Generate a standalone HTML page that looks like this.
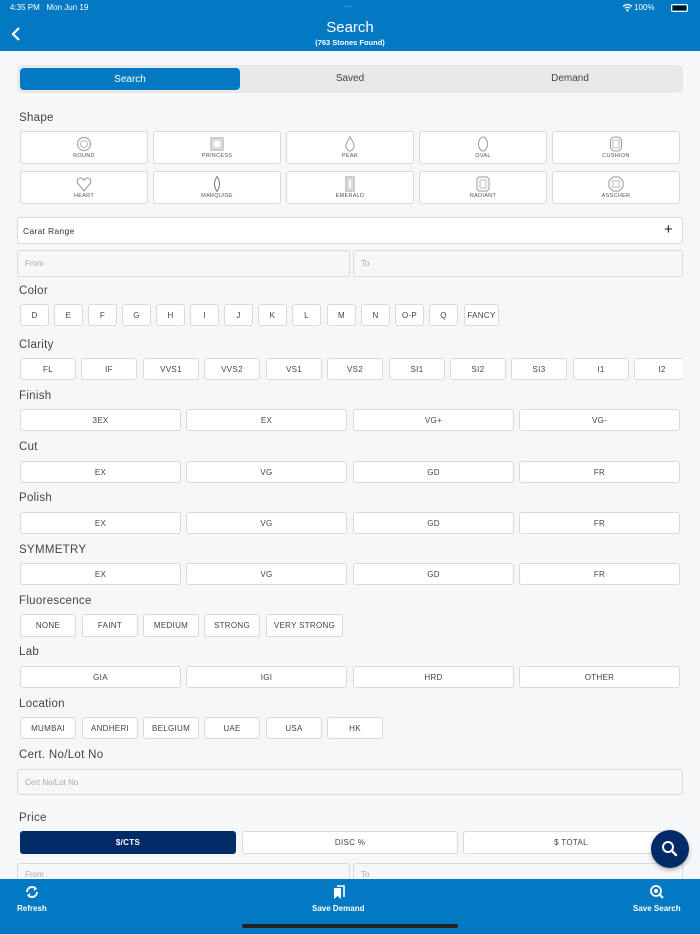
<!DOCTYPE html>
<html><head><meta charset="utf-8">
<style>
*{box-sizing:border-box;margin:0;padding:0}
body{width:700px;height:934px;overflow:hidden;background:#f6f7f9;font-family:"Liberation Sans",sans-serif;position:relative;color:#333}
.a{position:absolute}
.hdr{left:0;top:0;width:700px;height:51px;background:#0279c2;color:#fff}
.lbl{left:19px;font-size:11.5px;color:#444;letter-spacing:.3px}
.b{position:absolute;background:#fff;border:1px solid #d8dadd;border-radius:3px;font-size:8px;color:#444;display:flex;align-items:center;justify-content:center;letter-spacing:.3px}
.in{position:absolute;background:#f6f7f9;border:1px solid #d8dadd;border-radius:3px;font-size:8px;color:#aaa;padding-left:7px;display:flex;align-items:center}
.sh{position:absolute;background:#fff;border:1px solid #d8dadd;border-radius:3px;width:128px;height:33px;font-size:5.5px;color:#555;text-align:center;letter-spacing:.3px}
.sh svg{display:block;margin:4px auto 1px}
.bar{left:0;top:879px;width:700px;height:55px;background:#0279c2;color:#fff;font-size:8px;font-weight:bold}
</style></head><body>
<div class="a hdr">
  <div class="a" style="left:10px;top:3px;font-size:8px">4:35 PM&nbsp;&nbsp;&nbsp;Mon Jun 19</div>
  <div class="a" style="left:343px;top:2px;font-size:8px;color:#3a8fd0">•••</div>
  <svg class="a" style="left:622px;top:3px" width="11" height="9"><path d="M1 3.5 Q5.5 -0.5 10 3.5 M2.8 5.3 Q5.5 3 8.2 5.3" stroke="#fff" stroke-width="1.3" fill="none"/><circle cx="5.5" cy="7.3" r="1.2" fill="#fff"/></svg>
  <div class="a" style="left:634px;top:3px;font-size:8px">100%</div>
  <div class="a" style="left:671px;top:4px;width:17px;height:8px;border:1px solid #fff;border-radius:2px;padding:1px"><div style="width:100%;height:100%;background:#111;border-radius:1px"></div></div>
  <svg class="a" style="left:10px;top:26px" width="12" height="16"><path d="M9 2 L3 8 L9 14" stroke="#fff" stroke-width="2.2" fill="none"/></svg>
  <div class="a" style="left:0;width:700px;top:19px;text-align:center;font-size:15px">Search</div>
  <div class="a" style="left:0;width:700px;top:38px;text-align:center;font-size:7.5px;font-weight:bold">(763 Stones Found)</div>
</div>
<div class="a" style="left:17px;top:65px;width:666px;height:28px;background:#e7e8e9;border-radius:5px"></div>
<div class="a" style="left:20px;top:68px;width:220px;height:22px;background:#0279c2;border-radius:4px;color:#fff;font-size:10px;display:flex;align-items:center;justify-content:center">Search</div>
<div class="a" style="left:240px;width:220px;top:73px;text-align:center;font-size:10px;color:#444">Saved</div>
<div class="a" style="left:460px;width:220px;top:73px;text-align:center;font-size:10px;color:#444">Demand</div>

<div class="a lbl" style="top:112px">Shape</div>
<div class="sh" style="left:20px;top:131px"><svg width="16" height="16"><circle cx="8" cy="8" r="6.5" fill="none" stroke="#999"/><circle cx="8" cy="8" r="3.5" fill="none" stroke="#bbb"/></svg>ROUND</div>
<div class="sh" style="left:153px;top:131px"><svg width="16" height="16"><rect x="2" y="2" width="12" height="12" fill="none" stroke="#999"/><rect x="4" y="4" width="8" height="8" fill="none" stroke="#bbb"/></svg>PRINCESS</div>
<div class="sh" style="left:286px;top:131px"><svg width="16" height="16"><path d="M8 1 Q13 9 12 11 Q10 15 8 15 Q6 15 4 11 Q3 9 8 1Z" fill="none" stroke="#999"/></svg>PEAR</div>
<div class="sh" style="left:419px;top:131px"><svg width="16" height="16"><ellipse cx="8" cy="8" rx="4.5" ry="7" fill="none" stroke="#999"/></svg>OVAL</div>
<div class="sh" style="left:552px;top:131px"><svg width="16" height="16"><rect x="2.5" y="1" width="11" height="14" rx="4" fill="none" stroke="#999"/><rect x="5" y="4" width="6" height="8" fill="none" stroke="#bbb"/></svg>CUSHION</div>
<div class="sh" style="left:20px;top:171px"><svg width="16" height="16"><path d="M8 15 L1.5 7 Q0.5 2 4.5 2 Q7 2 8 4.5 Q9 2 11.5 2 Q15.5 2 14.5 7Z" fill="none" stroke="#999"/></svg>HEART</div>
<div class="sh" style="left:153px;top:171px"><svg width="16" height="16"><path d="M8 0.5 Q13 8 8 15.5 Q3 8 8 0.5Z" fill="none" stroke="#777"/></svg>MARQUISE</div>
<div class="sh" style="left:286px;top:171px"><svg width="16" height="16"><rect x="4" y="1" width="8" height="14" fill="none" stroke="#999"/><rect x="6" y="3" width="4" height="10" fill="none" stroke="#bbb"/></svg>EMERALD</div>
<div class="sh" style="left:419px;top:171px"><svg width="16" height="16"><path d="M4 1H12L14 3V13L12 15H4L2 13V3Z" fill="none" stroke="#999"/><rect x="5" y="4" width="6" height="8" fill="none" stroke="#bbb"/></svg>RADIANT</div>
<div class="sh" style="left:552px;top:171px"><svg width="16" height="16"><path d="M5 1H11L15 5V11L11 15H5L1 11V5Z" fill="none" stroke="#999"/><rect x="5" y="5" width="6" height="6" fill="none" stroke="#bbb"/></svg>ASSCHER</div>

<div class="b" style="left:17px;top:217px;width:666px;height:27px;justify-content:flex-start;padding-left:5px;font-size:8.5px;color:#333">Carat Range</div>
<div class="a" style="left:664px;top:221px;font-size:15px;color:#123">+</div>
<div class="in" style="left:17px;top:250px;width:333px;height:27px">From</div>
<div class="in" style="left:353px;top:250px;width:330px;height:27px">To</div>

<div class="a lbl" style="top:285px">Color</div>
<div class="b" style="left:20px;top:304px;width:29px;height:22px">D</div>
<div class="b" style="left:54px;top:304px;width:29px;height:22px">E</div>
<div class="b" style="left:88px;top:304px;width:29px;height:22px">F</div>
<div class="b" style="left:122px;top:304px;width:29px;height:22px">G</div>
<div class="b" style="left:156px;top:304px;width:29px;height:22px">H</div>
<div class="b" style="left:190px;top:304px;width:29px;height:22px">I</div>
<div class="b" style="left:224px;top:304px;width:29px;height:22px">J</div>
<div class="b" style="left:258px;top:304px;width:29px;height:22px">K</div>
<div class="b" style="left:292px;top:304px;width:29px;height:22px">L</div>
<div class="b" style="left:327px;top:304px;width:29px;height:22px">M</div>
<div class="b" style="left:361px;top:304px;width:29px;height:22px">N</div>
<div class="b" style="left:395px;top:304px;width:29px;height:22px">O-P</div>
<div class="b" style="left:429px;top:304px;width:29px;height:22px">Q</div>
<div class="b" style="left:464px;top:304px;width:35px;height:22px">FANCY</div>

<div class="a lbl" style="top:339px">Clarity</div>
<div class="a" style="left:0;top:358px;width:683px;height:24px;overflow:hidden">
<div class="b" style="left:20px;top:0;width:56px;height:22px">FL</div>
<div class="b" style="left:81px;top:0;width:56px;height:22px">IF</div>
<div class="b" style="left:143px;top:0;width:56px;height:22px">VVS1</div>
<div class="b" style="left:204px;top:0;width:56px;height:22px">VVS2</div>
<div class="b" style="left:266px;top:0;width:56px;height:22px">VS1</div>
<div class="b" style="left:327px;top:0;width:56px;height:22px">VS2</div>
<div class="b" style="left:389px;top:0;width:56px;height:22px">SI1</div>
<div class="b" style="left:450px;top:0;width:56px;height:22px">SI2</div>
<div class="b" style="left:511px;top:0;width:56px;height:22px">SI3</div>
<div class="b" style="left:573px;top:0;width:56px;height:22px">I1</div>
<div class="b" style="left:634px;top:0;width:56px;height:22px">I2</div>
</div>

<div class="a lbl" style="top:390px">Finish</div>
<div class="b" style="left:20px;top:409px;width:161px;height:22px">3EX</div>
<div class="b" style="left:186px;top:409px;width:161px;height:22px">EX</div>
<div class="b" style="left:353px;top:409px;width:161px;height:22px">VG+</div>
<div class="b" style="left:519px;top:409px;width:161px;height:22px">VG-</div>

<div class="a lbl" style="top:441px">Cut</div>
<div class="b" style="left:20px;top:461px;width:161px;height:22px">EX</div>
<div class="b" style="left:186px;top:461px;width:161px;height:22px">VG</div>
<div class="b" style="left:353px;top:461px;width:161px;height:22px">GD</div>
<div class="b" style="left:519px;top:461px;width:161px;height:22px">FR</div>

<div class="a lbl" style="top:492px">Polish</div>
<div class="b" style="left:20px;top:512px;width:161px;height:22px">EX</div>
<div class="b" style="left:186px;top:512px;width:161px;height:22px">VG</div>
<div class="b" style="left:353px;top:512px;width:161px;height:22px">GD</div>
<div class="b" style="left:519px;top:512px;width:161px;height:22px">FR</div>

<div class="a lbl" style="top:544px">SYMMETRY</div>
<div class="b" style="left:20px;top:563px;width:161px;height:22px">EX</div>
<div class="b" style="left:186px;top:563px;width:161px;height:22px">VG</div>
<div class="b" style="left:353px;top:563px;width:161px;height:22px">GD</div>
<div class="b" style="left:519px;top:563px;width:161px;height:22px">FR</div>

<div class="a lbl" style="top:595px">Fluorescence</div>
<div class="b" style="left:20px;top:614px;width:56px;height:23px">NONE</div>
<div class="b" style="left:82px;top:614px;width:56px;height:23px">FAINT</div>
<div class="b" style="left:143px;top:614px;width:56px;height:23px">MEDIUM</div>
<div class="b" style="left:204px;top:614px;width:56px;height:23px">STRONG</div>
<div class="b" style="left:266px;top:614px;width:77px;height:23px">VERY STRONG</div>

<div class="a lbl" style="top:646px">Lab</div>
<div class="b" style="left:20px;top:666px;width:161px;height:22px">GIA</div>
<div class="b" style="left:186px;top:666px;width:161px;height:22px">IGI</div>
<div class="b" style="left:353px;top:666px;width:161px;height:22px">HRD</div>
<div class="b" style="left:519px;top:666px;width:161px;height:22px">OTHER</div>

<div class="a lbl" style="top:698px">Location</div>
<div class="b" style="left:20px;top:717px;width:56px;height:22px">MUMBAI</div>
<div class="b" style="left:82px;top:717px;width:56px;height:22px">ANDHERI</div>
<div class="b" style="left:143px;top:717px;width:56px;height:22px">BELGIUM</div>
<div class="b" style="left:204px;top:717px;width:56px;height:22px">UAE</div>
<div class="b" style="left:266px;top:717px;width:56px;height:22px">USA</div>
<div class="b" style="left:327px;top:717px;width:56px;height:22px">HK</div>

<div class="a lbl" style="top:749px">Cert. No/Lot No</div>
<div class="in" style="left:17px;top:769px;width:666px;height:26px">Cert No/Lot No</div>

<div class="a lbl" style="top:812px">Price</div>
<div class="b" style="left:20px;top:831px;width:216px;height:23px;background:#022b68;border-color:#022b68;color:#fff;font-weight:bold">$/CTS</div>
<div class="b" style="left:242px;top:831px;width:216px;height:23px">DISC %</div>
<div class="b" style="left:463px;top:831px;width:216px;height:23px">$ TOTAL</div>
<div class="in" style="left:17px;top:863px;width:333px;height:26px;align-items:flex-start;padding-top:6px">From</div>
<div class="in" style="left:353px;top:863px;width:330px;height:26px;align-items:flex-start;padding-top:6px">To</div>

<div class="a" style="left:651px;top:830px;width:38px;height:38px;border-radius:50%;background:#022b68;box-shadow:0 2px 4px rgba(0,0,0,.3)">
<svg width="38" height="38"><circle cx="17" cy="17" r="5" fill="none" stroke="#fff" stroke-width="2"/><path d="M21 21 L25 25" stroke="#fff" stroke-width="2.4" stroke-linecap="round"/></svg></div>

<div class="a bar">
  <svg class="a" style="left:24px;top:5px" width="16" height="16"><path d="M3 8 A5 5 0 0 1 12 5" stroke="#fff" stroke-width="2" fill="none"/><path d="M13 8 A5 5 0 0 1 4 11" stroke="#fff" stroke-width="2" fill="none"/><path d="M10 2 L13 5 L10 7Z M6 14 L3 11 L6 9Z" fill="#fff"/></svg>
  <div class="a" style="left:17px;top:25px">Refresh</div>
  <svg class="a" style="left:331px;top:4px" width="16" height="18"><path d="M3 5 H10 V16 L6.5 13 L3 16Z" fill="#fff"/><path d="M6 3 H13 V14" stroke="#fff" stroke-width="1.6" fill="none"/></svg>
  <div class="a" style="left:312px;top:25px">Save Demand</div>
  <svg class="a" style="left:649px;top:5px" width="16" height="16"><circle cx="7" cy="7" r="5" fill="none" stroke="#fff" stroke-width="1.8"/><circle cx="7" cy="7" r="2" fill="#fff"/><path d="M10.5 10.5 L14 14" stroke="#fff" stroke-width="2"/></svg>
  <div class="a" style="left:633px;top:25px">Save Search</div>
  <div class="a" style="left:242px;top:45px;width:216px;height:4px;border-radius:2px;background:#222"></div>
</div>
</body></html>
